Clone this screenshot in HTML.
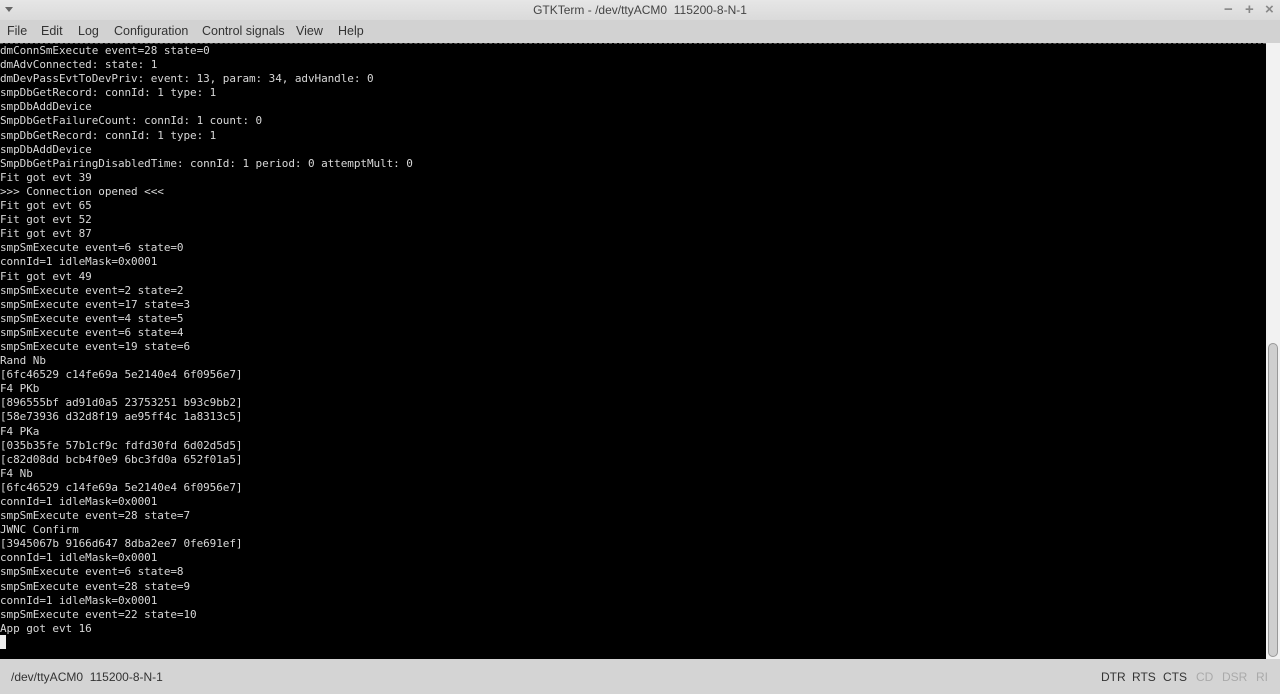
<!DOCTYPE html>
<html><head><meta charset="utf-8">
<style>
*{margin:0;padding:0;box-sizing:border-box}
html,body{width:1280px;height:694px;overflow:hidden;background:#d2d2d2;font-family:"Liberation Sans","DejaVu Sans",sans-serif}
#title{position:absolute;left:0;top:0;width:1280px;height:20px;background:linear-gradient(#e6e6e6,#dadada);font-size:12px;color:#444;text-align:center;line-height:20px}
#title .b{position:absolute;top:0;font-size:15px;font-weight:bold;color:#888;line-height:19px}
#arrow{position:absolute;left:5px;top:7px;width:0;height:0;border-left:4px solid transparent;border-right:4px solid transparent;border-top:5px solid #666}
#menu{position:absolute;left:0;top:20px;width:1280px;height:23px;background:#d2d2d2;font-size:12.5px;color:#333}
#menu span{position:absolute;top:4px}
#term{position:absolute;left:0;top:43px;width:1266px;height:616px;background:#000;border-top:1px dashed #555}
#term pre{position:absolute;left:0;top:0;font-family:"DejaVu Sans Mono","Liberation Mono",monospace;font-size:11px;line-height:14.1px;color:#d8d8d8;letter-spacing:-0.07px}
#cursor{position:absolute;left:0;top:591px;width:6px;height:14px;background:#eee}
#sb{position:absolute;left:1266px;top:43px;width:14px;height:616px;background:#f2f2f2}
#thumb{position:absolute;left:1268px;top:343px;width:10px;height:314px;background:#cfcfcf;border:1px solid #999;border-radius:5px}
#status{position:absolute;left:0;top:659px;width:1280px;height:35px;background:#d4d4d4;font-size:12px;color:#333}
#status span{position:absolute;top:11px}
.off{color:#aaa}
</style></head><body>
<div id="title"><div id="arrow"></div>GTKTerm - /dev/ttyACM0&nbsp; 115200-8-N-1<span class="b" style="left:1224px">−</span><span class="b" style="left:1245px">+</span><span class="b" style="left:1265px">×</span></div>
<div id="menu"><span style="left:7px">File</span><span style="left:41px">Edit</span><span style="left:78px">Log</span><span style="left:114px">Configuration</span><span style="left:202px">Control signals</span><span style="left:296px">View</span><span style="left:338px">Help</span></div>
<div id="term"><pre>dmConnSmExecute event=28 state=0
dmAdvConnected: state: 1
dmDevPassEvtToDevPriv: event: 13, param: 34, advHandle: 0
smpDbGetRecord: connId: 1 type: 1
smpDbAddDevice
SmpDbGetFailureCount: connId: 1 count: 0
smpDbGetRecord: connId: 1 type: 1
smpDbAddDevice
SmpDbGetPairingDisabledTime: connId: 1 period: 0 attemptMult: 0
Fit got evt 39
&gt;&gt;&gt; Connection opened &lt;&lt;&lt;
Fit got evt 65
Fit got evt 52
Fit got evt 87
smpSmExecute event=6 state=0
connId=1 idleMask=0x0001
Fit got evt 49
smpSmExecute event=2 state=2
smpSmExecute event=17 state=3
smpSmExecute event=4 state=5
smpSmExecute event=6 state=4
smpSmExecute event=19 state=6
Rand Nb
[6fc46529 c14fe69a 5e2140e4 6f0956e7]
F4 PKb
[896555bf ad91d0a5 23753251 b93c9bb2]
[58e73936 d32d8f19 ae95ff4c 1a8313c5]
F4 PKa
[035b35fe 57b1cf9c fdfd30fd 6d02d5d5]
[c82d08dd bcb4f0e9 6bc3fd0a 652f01a5]
F4 Nb
[6fc46529 c14fe69a 5e2140e4 6f0956e7]
connId=1 idleMask=0x0001
smpSmExecute event=28 state=7
JWNC Confirm
[3945067b 9166d647 8dba2ee7 0fe691ef]
connId=1 idleMask=0x0001
smpSmExecute event=6 state=8
smpSmExecute event=28 state=9
connId=1 idleMask=0x0001
smpSmExecute event=22 state=10
App got evt 16</pre><div id="cursor"></div></div>
<div id="sb"></div><div id="thumb"></div>
<div id="status"><span style="left:11px">/dev/ttyACM0&nbsp; 115200-8-N-1</span><span style="left:1101px">DTR</span><span style="left:1132px">RTS</span><span style="left:1163px">CTS</span><span class="off" style="left:1196px">CD</span><span class="off" style="left:1222px">DSR</span><span class="off" style="left:1256px">RI</span></div>
</body></html>
